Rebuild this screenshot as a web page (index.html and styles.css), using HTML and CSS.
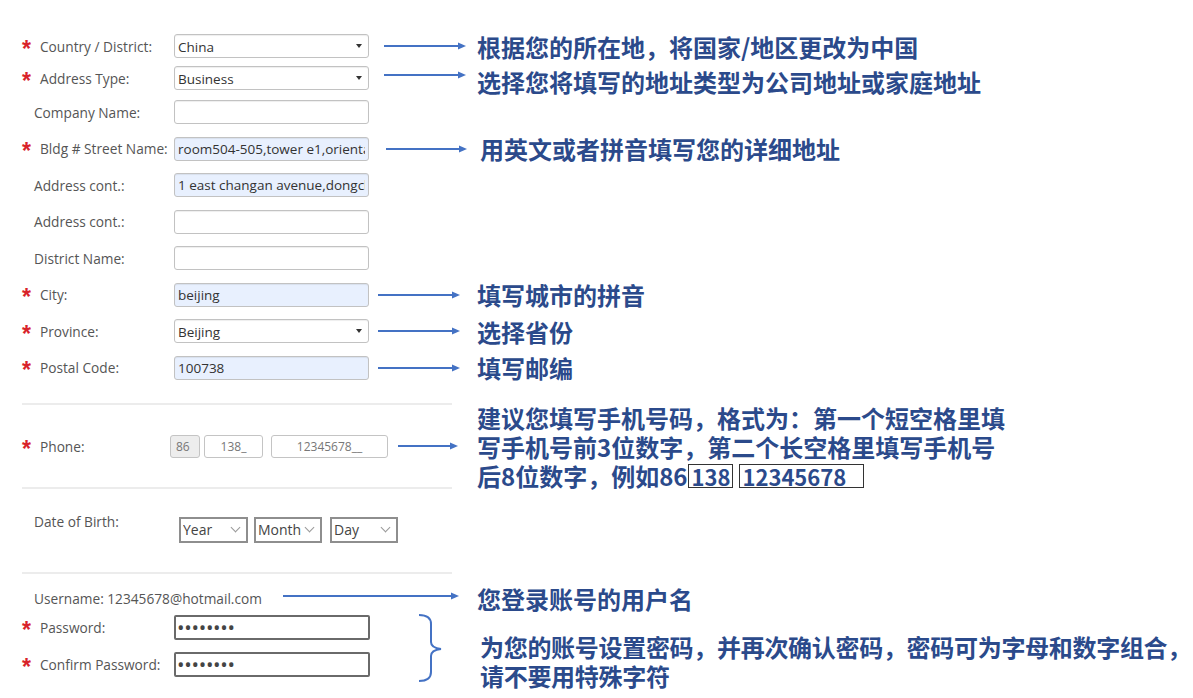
FILE: index.html
```html
<!DOCTYPE html>
<html lang="zh-CN">
<head>
    <meta charset="UTF-8">
    <title>Address form guide</title>
    <link rel="stylesheet" href="styles.css">
</head>
<body>
<div class="page">

    <div class="row row-sm">
        <label class="lbl req"><span class="star">*</span>Country / District:</label>
        <div class="sel"><select class="inp"><option>China</option></select></div>
        <div class="note">
            <svg class="arrow" width="82" height="10" viewBox="0 0 82 10"><line x1="0" y1="5" x2="76" y2="5"/><polygon points="74,1.5 82,5 74,8.5"/></svg>
            <span class="txt">根据您的所在地，将国家/地区更改为中国</span>
        </div>
    </div>

    <div class="row row-sm">
        <label class="lbl req"><span class="star">*</span>Address Type:</label>
        <div class="sel"><select class="inp"><option>Business</option></select></div>
        <div class="note note-low">
            <svg class="arrow" width="82" height="10" viewBox="0 0 82 10"><line x1="0" y1="5" x2="76" y2="5"/><polygon points="74,1.5 82,5 74,8.5"/></svg>
            <span class="txt">选择您将填写的地址类型为公司地址或家庭地址</span>
        </div>
    </div>

    <div class="row">
        <label class="lbl">Company Name:</label>
        <input class="inp" type="text">
    </div>

    <div class="row">
        <label class="lbl req"><span class="star">*</span>Bldg # Street Name:</label>
        <input class="inp filled" type="text" value="room504-505,tower e1,oriental plaza">
        <div class="note note-street">
            <svg class="arrow" width="81" height="10" viewBox="0 0 81 10"><line x1="0" y1="5" x2="75" y2="5"/><polygon points="73,1.5 81,5 73,8.5"/></svg>
            <span class="txt">用英文或者拼音填写您的详细地址</span>
        </div>
    </div>

    <div class="row">
        <label class="lbl">Address cont.:</label>
        <input class="inp filled" type="text" value="1 east changan avenue,dongcheng district">
    </div>

    <div class="row">
        <label class="lbl">Address cont.:</label>
        <input class="inp" type="text">
    </div>

    <div class="row">
        <label class="lbl">District Name:</label>
        <input class="inp" type="text">
    </div>

    <div class="row">
        <label class="lbl req"><span class="star">*</span>City:</label>
        <input class="inp filled" type="text" value="beijing">
        <div class="note note-city">
            <svg class="arrow" width="82" height="10" viewBox="0 0 82 10"><line x1="0" y1="5" x2="76" y2="5"/><polygon points="74,1.5 82,5 74,8.5"/></svg>
            <span class="txt">填写城市的拼音</span>
        </div>
    </div>

    <div class="row">
        <label class="lbl req"><span class="star">*</span>Province:</label>
        <div class="sel"><select class="inp"><option>Beijing</option></select></div>
        <div class="note note-city">
            <svg class="arrow" width="82" height="10" viewBox="0 0 82 10"><line x1="0" y1="5" x2="76" y2="5"/><polygon points="74,1.5 82,5 74,8.5"/></svg>
            <span class="txt">选择省份</span>
        </div>
    </div>

    <div class="row">
        <label class="lbl req"><span class="star">*</span>Postal Code:</label>
        <input class="inp filled" type="text" value="100738">
        <div class="note note-city">
            <svg class="arrow" width="82" height="10" viewBox="0 0 82 10"><line x1="0" y1="5" x2="76" y2="5"/><polygon points="74,1.5 82,5 74,8.5"/></svg>
            <span class="txt">填写邮编</span>
        </div>
    </div>

    <div class="divider first"></div>

    <div class="row row-phone">
        <label class="lbl lbl-phone req"><span class="star">*</span>Phone:</label>
        <div class="phone">
            <span class="ph ph-cc">86</span>
            <span class="ph ph-area">138_</span>
            <span class="ph ph-num">12345678__</span>
        </div>
        <div class="note note-phone">
            <svg class="arrow" width="60" height="10" viewBox="0 0 60 10"><line x1="0" y1="5" x2="54" y2="5"/><polygon points="52,1.5 60,5 52,8.5"/></svg>
            <span class="txt">建议您填写手机号码，格式为：第一个短空格里填<br>写手机号前3位数字，第二个长空格里填写手机号<br>后8位数字，例如86<span class="ex">138</span><span class="ex ex-long">12345678</span></span>
        </div>
    </div>

    <div class="divider"></div>

    <div class="row row-dob">
        <label class="lbl lbl-dob">Date of Birth:</label>
        <div class="dob">
            <div class="dsel dsel-year"><select><option>Year</option></select></div>
            <div class="dsel dsel-month"><select><option>Month</option></select></div>
            <div class="dsel dsel-day"><select><option>Day</option></select></div>
        </div>
    </div>

    <div class="divider"></div>

    <div class="row row-user">
        <span class="user">Username: 12345678@hotmail.com</span>
        <div class="note note-user">
            <svg class="arrow" width="176" height="10" viewBox="0 0 176 10"><line x1="0" y1="5" x2="170" y2="5"/><polygon points="168,1.5 176,5 168,8.5"/></svg>
            <span class="txt">您登录账号的用户名</span>
        </div>
    </div>

    <div class="pw-block">
        <div class="pw-fields">
            <div class="row row-pw">
                <label class="lbl req"><span class="star">*</span>Password:</label>
                <input class="inp pw" type="password" value="abcdefgh">
            </div>
            <div class="row row-pw">
                <label class="lbl req"><span class="star">*</span>Confirm Password:</label>
                <input class="inp pw" type="password" value="abcdefgh">
            </div>
        </div>
        <svg class="brace" width="26" height="70" viewBox="0 0 26 70">
            <path d="M1 2 Q13 2 13 11 V29 Q13 35 23 36 Q13 37 13 43 V59 Q13 68 1 68"/>
        </svg>
        <span class="txt pw-txt">为您的账号设置密码，并再次确认密码，密码可为字母和数字组合，<br>请不要用特殊字符</span>
    </div>

</div>
</body>
</html>
```

FILE: styles.css
```css
body {
    margin: 0;
    background: #fff;
    font-family: "Open Sans", "Liberation Sans", sans-serif;
    font-size: 13.7px;
    color: #555;
}
.page {
    padding: 30px 0 0 22px;
}
.row {
    display: flex;
    align-items: center;
    height: 36.5px;
}
.row-sm {
    height: 32px;
}
.lbl {
    flex: none;
    width: 152px;
    padding-left: 12px;
    box-sizing: border-box;
    white-space: nowrap;
}
.lbl.req {
    padding-left: 0;
}
.star {
    display: inline-block;
    width: 18px;
    color: #d8232a;
    font-family: "Liberation Sans", sans-serif;
    font-weight: bold;
    font-size: 23px;
    line-height: 13px;
    vertical-align: -5px;
}
.inp {
    flex: none;
    width: 195px;
    height: 24px;
    margin: 0;
    padding: 0 3px;
    border: 1px solid #c2c2c2;
    border-radius: 3px;
    box-sizing: border-box;
    box-shadow: inset 0 1px 1px rgba(0, 0, 0, 0.07);
    background: #fff;
    font-family: "Open Sans", "Liberation Sans", sans-serif;
    font-size: 13.5px;
    color: #333;
    outline: none;
}
.inp.filled {
    background: #e8f0fe;
}
.sel {
    position: relative;
    flex: none;
}
.sel select {
    appearance: none;
    -webkit-appearance: none;
    padding-top: 2px;
}
.sel::after {
    content: "";
    position: absolute;
    right: 7px;
    top: 10px;
    border-left: 3.5px solid transparent;
    border-right: 3.5px solid transparent;
    border-top: 4px solid #333;
}

/* notes on the right */
.note {
    display: flex;
    align-items: center;
    margin-left: 15px;
}
.arrow {
    flex: none;
    margin-right: 11px;
}
.arrow line {
    stroke: #4472c4;
    stroke-width: 2;
}
.arrow polygon {
    fill: #4472c4;
}
.txt {
    font-family: "Noto Sans CJK SC", "Noto Sans", sans-serif;
    font-weight: 700;
    font-size: 24px;
    line-height: 29px;
    color: #2b4a8b;
    white-space: nowrap;
}
.note-low .arrow {
    margin-bottom: 6px;
}
.note-low .txt {
    padding-top: 7px;
}
.note-street {
    margin-left: 17px;
}
.note-street .arrow {
    margin-right: 13px;
}
.note-city {
    margin-left: 9px;
}
.note-city .arrow {
    margin-right: 17px;
}

.divider {
    width: 430px;
    height: 2px;
    background: #ececec;
}
.divider.first {
    margin-top: 17px;
}

/* phone */
.row-phone {
    height: 82px;
}
.lbl-phone {
    width: 148px;
}
.phone {
    display: flex;
    flex: none;
}
.ph {
    height: 23px;
    line-height: 21px;
    border: 1px solid #c4c4c4;
    border-radius: 3px;
    box-sizing: border-box;
    font-size: 12px;
    color: #777;
}
.ph-cc {
    width: 30px;
    padding-left: 5px;
    background: #ededed;
}
.ph-area {
    width: 59px;
    margin-left: 4px;
    text-align: center;
}
.ph-num {
    width: 117px;
    margin-left: 8px;
    text-align: center;
}
.note-phone {
    margin-left: 10px;
}
.note-phone .arrow {
    margin-right: 19px;
}
.ex {
    display: inline-block;
    box-sizing: border-box;
    font-size: 22px;
    line-height: 22px;
    border: 1.5px solid #333;
    padding: 0 2px;
    margin-left: 1px;
}
.ex-long {
    width: 125px;
    margin-left: 6px;
}

/* date of birth */
.row-dob {
    height: 83px;
    padding-bottom: 2px;
    box-sizing: border-box;
}
.lbl-dob {
    width: 157px;
    margin-bottom: 17px;
}
.dob {
    display: flex;
}
.dsel {
    position: relative;
    width: 69px;
    height: 26px;
    border: 2px solid #8e8e8e;
    box-sizing: border-box;
}
.dsel select {
    appearance: none;
    -webkit-appearance: none;
    width: 100%;
    height: 100%;
    border: none;
    background: #fff;
    padding: 0 0 0 2px;
    font-family: "Open Sans", "Liberation Sans", sans-serif;
    font-size: 14px;
    color: #444;
    outline: none;
}
.dsel::after {
    content: "";
    position: absolute;
    right: 7px;
    top: 5px;
    width: 6px;
    height: 6px;
    border-right: 1px solid #999;
    border-bottom: 1px solid #999;
    transform: rotate(45deg);
}
.dsel-month {
    width: 68px;
    margin-left: 6px;
}
.dsel-day {
    width: 68px;
    margin-left: 8px;
}

/* account */
.row-user {
    height: 22px;
    margin-top: 13px;
}
.user {
    flex: none;
    width: 261px;
    padding-left: 12px;
    box-sizing: border-box;
    white-space: nowrap;
}
.note-user {
    margin-left: 0;
}
.note-user .arrow {
    margin-bottom: 5px;
    margin-right: 18px;
}
.pw-block {
    display: flex;
    align-items: flex-start;
}
.pw-fields {
    width: 396px;
    flex: none;
}
.row-pw {
    height: 37px;
}
.pw {
    width: 196px;
    height: 25px;
    border: 2px solid #6a6a6a;
    border-radius: 2px;
    box-shadow: none;
    padding: 0 1px;
    font-size: 20px;
    letter-spacing: -0.3px;
    color: #444;
}
.brace {
    flex: none;
    margin-top: 4px;
}
.brace path {
    fill: none;
    stroke: #4472c4;
    stroke-width: 2;
}
.pw-txt {
    margin: 23px 0 0 36px;
    letter-spacing: -0.3px;
}
```
